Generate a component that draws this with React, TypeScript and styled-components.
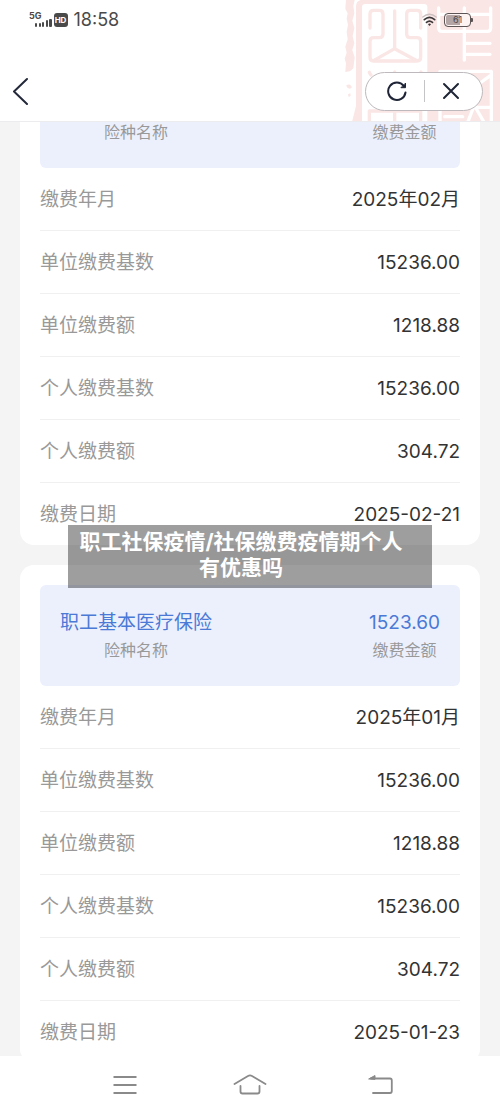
import React from "react";
import styled, { createGlobalStyle } from "styled-components";

const GlobalStyle = createGlobalStyle`
  * { box-sizing: border-box; }
  body {
    margin: 0;
    background: #f4f4f4;
    color: #333;
    font-family: Inter, "Noto Sans CJK SC", sans-serif;
  }
  button { border: 0; padding: 0; background: none; cursor: pointer; }
  svg { display: block; }
`;

const Header = styled.header`
  position: fixed;
  inset: 0 0 auto 0;
  z-index: 2;
  background: #fff;
  border-bottom: 1px solid #ececee;
  overflow: hidden;
`;

const Watermark = styled.svg`
  position: absolute;
  top: 0;
  right: 0;
  pointer-events: none;
`;

const StatusBar = styled.div`
  position: relative;
  display: flex;
  justify-content: space-between;
  align-items: center;
  height: 39px;
  padding: 0 29px;
`;

const StatusGroup = styled.div<{ $gap: number }>`
  display: flex;
  align-items: center;
  gap: ${(p) => p.$gap}px;
`;

const Network = styled.div`
  display: flex;
  align-items: flex-start;
  height: 16px;
  color: #4a4a4a;
`;

const NetworkLabel = styled.span`
  font-size: 9px;
  line-height: 8px;
  font-weight: 700;
`;

const SignalBars = styled.svg`
  margin: 6px 0 0 -7px;
`;

const HdBadge = styled.span`
  width: 14px;
  height: 14px;
  margin-left: 2px;
  border-radius: 3px;
  background: #4a4a4a;
  color: #fff;
  font-size: 8px;
  font-weight: 700;
  line-height: 14px;
  text-align: center;
`;

const Clock = styled.time`
  margin-left: 6px;
  font-size: 18px;
  line-height: 20px;
  color: #4a4a4a;
`;

const Battery = styled.div`
  position: relative;
  width: 27px;
  height: 14px;
  border: 1px solid #5c5455;
  border-radius: 4px;
  background: linear-gradient(to right, #b3a5a6 60%, #fdf3f3 60%);
  box-shadow: inset 0 0 0 1px #fdf3f3;
  color: #4a4445;
  font-size: 9px;
  line-height: 12px;
  text-align: center;

  &::after {
    content: "";
    position: absolute;
    top: 4px;
    right: -3px;
    width: 2px;
    height: 4px;
    border-radius: 0 1px 1px 0;
    background: #5c5455;
  }
`;

const TitleBar = styled.div`
  position: relative;
  display: flex;
  justify-content: space-between;
  align-items: center;
  height: 60px;
  margin-top: 22px;
  padding: 0 17px 0 12px;
`;

const Capsule = styled.div`
  display: flex;
  align-items: center;
  width: 118px;
  height: 39px;
  padding: 0 4px;
  border: 1px solid #bdb9bc;
  border-radius: 20px;
  background: #fff;
`;

const CapsuleButton = styled.button`
  display: flex;
  flex: 1;
  justify-content: center;
  align-items: center;
  height: 100%;
`;

const CapsuleDivider = styled.span`
  width: 1px;
  height: 22px;
  background: #c4c4c6;
`;

const Main = styled.main`
  display: flex;
  flex-direction: column;
  gap: 20px;
  padding: 47px 20px 50px;
`;

const Card = styled.section`
  position: relative;
  padding: 20px 20px 0;
  border-radius: 14px;
  background: #fff;
`;

const Summary = styled.div`
  display: flex;
  justify-content: space-between;
  padding: 24px 20px 23px;
  border-radius: 6px;
  background: #ecf0fd;
`;

const SummaryItem = styled.div`
  text-align: center;
`;

const SummaryValue = styled.div`
  font-size: 19px;
  line-height: 28px;
  color: #4a79d6;
`;

const SummaryLabel = styled.div`
  font-size: 16px;
  line-height: 26px;
  color: #999;
`;

const Details = styled.dl`
  margin: 0;
`;

const Row = styled.div`
  display: flex;
  justify-content: space-between;
  align-items: center;
  padding-top: 2px;
  font-size: 19px;
  line-height: 60px;
  border-bottom: 1px solid #f0f0f0;

  &:last-child { border-bottom: 0; }
`;

const Term = styled.dt`
  color: #999;
`;

const Value = styled.dd`
  margin: 0;
`;

const Banner = styled.h1`
  position: absolute;
  top: -40px;
  left: 0;
  right: 0;
  width: 364px;
  max-width: 100%;
  margin: 0 auto;
  padding: 4px 28px 7px 10px;
  background: rgba(0, 0, 0, 0.38);
  color: #fff;
  font-size: 21px;
  font-weight: 700;
  line-height: 26px;
  text-align: center;
  white-space: nowrap;
`;

const SystemNav = styled.nav`
  position: fixed;
  inset: auto 0 0 0;
  z-index: 2;
  display: grid;
  grid-template-columns: repeat(3, 1fr);
  height: 58px;
  padding: 0 62px;
  background: #fff;
`;

const NavButton = styled.button`
  display: flex;
  justify-content: center;
  align-items: center;
`;

type Payment = { month: string; date: string };

const payments: Payment[] = [
  { month: "2025年02月", date: "2025-02-21" },
  { month: "2025年01月", date: "2025-01-23" },
];

function PaymentCard({ month, date, children }: Payment & { children?: React.ReactNode }) {
  const rows = [
    ["缴费年月", month],
    ["单位缴费基数", "15236.00"],
    ["单位缴费额", "1218.88"],
    ["个人缴费基数", "15236.00"],
    ["个人缴费额", "304.72"],
    ["缴费日期", date],
  ];
  return (
    <Card>
      <Summary>
        <SummaryItem>
          <SummaryValue>职工基本医疗保险</SummaryValue>
          <SummaryLabel>险种名称</SummaryLabel>
        </SummaryItem>
        <SummaryItem>
          <SummaryValue>1523.60</SummaryValue>
          <SummaryLabel>缴费金额</SummaryLabel>
        </SummaryItem>
      </Summary>
      <Details>
        {rows.map(([term, value]) => (
          <Row key={term}>
            <Term>{term}</Term>
            <Value>{value}</Value>
          </Row>
        ))}
      </Details>
      {children}
    </Card>
  );
}

function SealWatermark() {
  return (
    <Watermark width="170" height="122" viewBox="0 0 510 366" fill="none" aria-hidden="true">
      <path
        d="M48 0H74L70 18 73 40 67 62 73 84 68 108 73 130 67 150 74 172 70 205 60 214 46 216 48 190 44 176 50 158 46 140 53 118 50 96 54 74 50 56 53 40 46 26Z"
        fill="#fae6e5"
      />
      <path d="M49 256q8-6 14 1t-4 9q-8 0-10-10ZM54 283l7-3 1 8-6 3Z" fill="#fae6e5" />
      <path d="M92 0H510V366H66L78 318V20Q78 4 92 0Z" fill="#fae6e5" />
      <path d="M96 22q0-10 10-10H282q10 0 10 10V366H96Z" fill="#fff" />
      <g stroke="#fae6e5" strokeWidth="10" strokeLinecap="round" strokeLinejoin="round">
        <path d="M120 84V42Q120 31 131 31H148Q159 31 159 42V102Q159 113 148 113H131Q120 113 120 124V172Q120 183 131 183H261Q272 183 272 172V124Q272 113 261 113H241Q230 113 230 102V42Q230 31 241 31H261Q272 31 272 42V84" />
        <path d="M194 33V146L132 181M194 146L258 181" />
        <path d="M118 217q2 6 5 8M194 216v4M266 225q5-3 7-9" />
        <path d="M118 370V333H272V370M194 333V370" />
      </g>
      <g stroke="#fff" strokeWidth="10" strokeLinecap="round" strokeLinejoin="round">
        <path d="M326 24V84Q326 94 336 94H472Q482 94 482 84V24M328 43H482M403 24V180M403 130H480M403 163H480" />
        <path d="M330 366V214H484V366M446 252L482 226M330 322H484M344 350H398M432 318L412 370M434 318L464 370" />
      </g>
    </Watermark>
  );
}

export default function App() {
  return (
    <>
      <GlobalStyle />
      <Header>
        <SealWatermark />
        <StatusBar>
          <StatusGroup $gap={0}>
            <Network>
              <NetworkLabel>5G</NetworkLabel>
              <SignalBars width="17" height="9" viewBox="0 0 17 9" fill="#4a4a4a" aria-hidden="true">
                <rect x="0" y="5" width="2" height="4" rx="1" />
                <rect x="4" y="5" width="2" height="4" rx="1" />
                <rect x="7" y="4" width="2" height="5" rx="1" />
                <rect x="11" y="2" width="2" height="7" rx="1" />
                <rect x="14" y="1" width="3" height="8" rx="1" />
              </SignalBars>
            </Network>
            <HdBadge>HD</HdBadge>
            <Clock>18:58</Clock>
          </StatusGroup>
          <StatusGroup $gap={7}>
            <svg width="15" height="14" viewBox="0 0 15 14" fill="none" strokeLinecap="round" aria-hidden="true">
              <path d="M.8 4Q7.500-1.500 14.200 4" stroke="#cbbfc0" strokeWidth="1.300" />
              <path d="M2.300 6.700Q7.500 2 12.700 6.700" stroke="#3c3738" strokeWidth="1.700" />
              <path d="M4.500 9.400Q7.500 6.800 10.500 9.400" stroke="#3c3738" strokeWidth="1.700" />
              <path d="M6 11.200Q7.500 10 9 11.200L7.500 13Z" fill="#3c3738" />
            </svg>
            <Battery>61</Battery>
          </StatusGroup>
        </StatusBar>
        <TitleBar>
          <button aria-label="返回">
            <svg width="18" height="28" viewBox="0 0 18 28" fill="none" stroke="#23283a" strokeWidth="2" strokeLinecap="round" strokeLinejoin="round">
              <path d="M15 2L2 14.500L15 27" />
            </svg>
          </button>
          <Capsule>
            <CapsuleButton aria-label="刷新">
              <svg width="22" height="22" viewBox="0 0 22 22" fill="none" stroke="#1f2536" strokeWidth="2" strokeLinecap="round" strokeLinejoin="round">
                <path d="M19.500 12.500A8.700 8.700 0 1 1 17.800 6" />
                <path d="M19.500 3.500V7.700H15.300Z" fill="#1f2536" strokeWidth="1" />
              </svg>
            </CapsuleButton>
            <CapsuleDivider />
            <CapsuleButton aria-label="关闭">
              <svg width="22" height="22" viewBox="0 0 22 22" fill="none" stroke="#1f2536" strokeWidth="2" strokeLinecap="round">
                <path d="M4 4L18 18M18 4L4 18" />
              </svg>
            </CapsuleButton>
          </Capsule>
        </TitleBar>
      </Header>

      <Main>
        <PaymentCard {...payments[0]} />
        <PaymentCard {...payments[1]}>
          <Banner>
            职工社保疫情/社保缴费疫情期个人
            <br />
            有优惠吗
          </Banner>
        </PaymentCard>
      </Main>

      <SystemNav>
        <NavButton aria-label="菜单">
          <svg width="24" height="20" viewBox="0 0 24 20" stroke="#8a8a8a" strokeWidth="1.800">
            <path d="M.5 2H23.500M.5 10H23.500M.5 18H23.500" />
          </svg>
        </NavButton>
        <NavButton aria-label="主页">
          <svg width="34" height="22" viewBox="0 0 34 22" fill="none" stroke="#8a8a8a" strokeWidth="1.800" strokeLinecap="round" strokeLinejoin="round">
            <path d="M1.500 10L15 2Q17 .9 19 2L32.500 10" />
            <path d="M7.500 12V17.500Q7.500 19.500 9.500 19.500H24.500Q26.500 19.500 26.500 17.500V12" />
          </svg>
        </NavButton>
        <NavButton aria-label="返回上一页">
          <svg width="36" height="22" viewBox="0 0 36 22" fill="none" stroke="#8a8a8a" strokeWidth="1.800" strokeLinecap="round" strokeLinejoin="round">
            <path d="M14 4.500H33Q34.800 4.500 34.800 6.500V17Q34.800 19 33 19H16" />
            <path d="M12 4.800L18 1.500V5Z" fill="#8a8a8a" strokeWidth="1" />
          </svg>
        </NavButton>
      </SystemNav>
    </>
  );
}
